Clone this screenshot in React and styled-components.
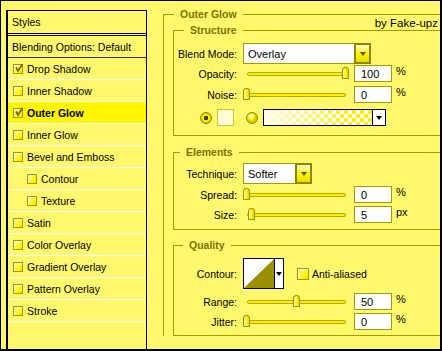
import React from 'react';
import styled, { createGlobalStyle } from 'styled-components';

const GlobalStyle = createGlobalStyle`
  body {
    margin: 0;
    background: #fff;
  }
`;

const styleItems = [
	{ name: 'Drop Shadow', checked: true },
	{ name: 'Inner Shadow' },
	{ name: 'Outer Glow', checked: true, active: true },
	{ name: 'Inner Glow' },
	{ name: 'Bevel and Emboss' },
	{ name: 'Contour', indent: true },
	{ name: 'Texture', indent: true },
	{ name: 'Satin' },
	{ name: 'Color Overlay' },
	{ name: 'Gradient Overlay' },
	{ name: 'Pattern Overlay' },
	{ name: 'Stroke' }
];

function CheckBox({ checked, size = 10 }) {
	return (
		<Check $size={size}>
			{checked && (
				<svg width="10" height="10" viewBox="0 0 10 10">
					<path d="M2 4.5 L4 8 L8.5 1" fill="none" stroke="#6b6200" strokeWidth="1.6" />
				</svg>
			)}
		</Check>
	);
}

function Dropdown({ width, value }) {
	return (
		<SelectBox>
			<SelectField $w={width}>{value}</SelectField>
			<DropButton>
				<ArrowDown />
			</DropButton>
		</SelectBox>
	);
}

function SliderRow({ label, value, pos, unit, mt }) {
	return (
		<Row $mt={mt} $h={17}>
			<Label>{label}</Label>
			<Slider>
				<Track />
				<Thumb style={{ left: Math.round(pos * 99) + 'px' }} />
			</Slider>
			<NumberBox>{value}</NumberBox>
			<Unit>{unit}</Unit>
		</Row>
	);
}

export default function App() {
	return (
		<>
			<GlobalStyle />
			<Window>
				<StylesPanel>
					<PanelTitle>Styles</PanelTitle>
					<BlendingRow>Blending Options: Default</BlendingRow>
					{styleItems.map((item) => (
						<StyleRow key={item.name} $active={item.active} $indent={item.indent}>
							<CheckBox checked={item.checked} />
							{item.name}
						</StyleRow>
					))}
				</StylesPanel>

				<Settings>
					<Credit>by Fake-upz</Credit>
					<Group $open>
						<Legend $indent={10}>Outer Glow</Legend>

						<Group $top={3} $left={9}>
							<Legend $indent={10}>Structure</Legend>
							<GroupBody $pt={6} $pb={9}>
								<Row $h={21}>
									<Label>Blend Mode:</Label>
									<Dropdown width={111} value="Overlay" />
								</Row>
								<SliderRow label="Opacity:" value="100" pos={1} unit="%" mt={1} />
								<SliderRow label="Noise:" value="0" pos={0} unit="%" mt={4} />
								<ColorRow>
									<Radio $on />
									<Swatch />
									<Radio />
									<GradientPicker>
										<GradientFill />
										<GradientArrow>
											<ArrowDown $dark />
										</GradientArrow>
									</GradientPicker>
								</ColorRow>
							</GroupBody>
						</Group>

						<Group $top={10} $left={9}>
							<Legend $indent={6}>Elements</Legend>
							<GroupBody $pt={4} $pb={6}>
								<Row $h={21}>
									<Label>Technique:</Label>
									<Dropdown width={52} value="Softer" />
								</Row>
								<SliderRow label="Spread:" value="0" pos={0} unit="%" mt={2} />
								<SliderRow label="Size:" value="5" pos={0.05} unit="px" mt={3} />
							</GroupBody>
						</Group>

						<Group $top={9} $left={9}>
							<Legend $indent={9}>Quality</Legend>
							<GroupBody $pt={6} $pb={5}>
								<Row $h={31}>
									<Label>Contour:</Label>
									<ContourPicker>
										<ContourPreview>
											<svg width="30" height="29" viewBox="0 0 30 29">
												<rect width="30" height="29" fill="#fff" />
												<polygon points="0,29 30,0 30,29" fill="#9a9000" />
											</svg>
										</ContourPreview>
										<ContourArrow>
											<ArrowDown $dark />
										</ContourArrow>
									</ContourPicker>
									<AntiAlias>
										<CheckBox size={12} />
										Anti-aliased
									</AntiAlias>
								</Row>
								<SliderRow label="Range:" value="50" pos={0.5} unit="%" mt={4} />
								<SliderRow label="Jitter:" value="0" pos={0} unit="%" mt={3} />
							</GroupBody>
						</Group>
					</Group>
				</Settings>
			</Window>
		</>
	);
}

const Window = styled.div`
	width: 442px;
	height: 351px;
	box-sizing: border-box;
	border-style: solid;
	border-color: #000;
	border-width: 1px 2px 2px 1px;
	background: #fff86c;
	display: flex;
	overflow: hidden;
	font-family: 'Liberation Sans', Arial, sans-serif;
	font-size: 10.5px;
	color: #000;
`;

const StylesPanel = styled.div`
	margin: 9px 0 0 5px;
	width: 141px;
	flex-shrink: 0;
	box-sizing: border-box;
	border: solid #000;
	border-width: 1px 1px 0 2px;
	display: flex;
	flex-direction: column;
`;

const PanelTitle = styled.div`
	height: 22px;
	display: flex;
	align-items: center;
	padding-left: 4px;
	border-bottom: 3px double #000;
`;

const BlendingRow = styled.div`
	height: 21px;
	display: flex;
	align-items: center;
	padding-left: 4px;
	border-bottom: 1px solid #3a3500;
`;

const StyleRow = styled.div`
	height: 21px;
	display: flex;
	align-items: center;
	gap: 4px;
	padding-left: ${(p) => (p.$indent ? 19 : 5)}px;
	border-bottom: 1px solid #fff;
	background: ${(p) => (p.$active ? '#fff500' : 'transparent')};
	font-weight: ${(p) => (p.$active ? 'bold' : 'normal')};
`;

const Check = styled.span`
	width: ${(p) => p.$size}px;
	height: ${(p) => p.$size}px;
	box-sizing: border-box;
	flex-shrink: 0;
	border: 1px solid #a39a00;
	background: linear-gradient(135deg, #fff9b0 0%, #fff200 70%, #f0e000 100%);
	box-shadow: inset 1px 1px 0 #fffde0;
	display: flex;
	align-items: center;
	justify-content: center;
	overflow: visible;

	svg {
		flex-shrink: 0;
		margin: -1px -1px 0 0;
	}
`;

const Settings = styled.div`
	flex: 1;
	min-width: 0;
	position: relative;
	padding: 7px 0 0 16px;
`;

const Credit = styled.div`
	position: absolute;
	top: 15px;
	right: 2px;
	line-height: 14px;
	font-size: 11.5px;
`;

const Group = styled.fieldset`
	margin: ${(p) => p.$top || 0}px 0 0 ${(p) => p.$left || 0}px;
	padding: 0;
	min-width: 0;
	border: 1px solid #a39a00;
	border-right: none;
	${(p) => p.$open && 'border-bottom: none;'}
`;

const Legend = styled.legend`
	margin-left: ${(p) => p.$indent}px;
	padding: 0 6px;
	line-height: 13px;
	font-size: 10.5px;
	font-weight: bold;
	color: #7d7300;
`;

const GroupBody = styled.div`
	padding: ${(p) => p.$pt}px 0 ${(p) => p.$pb}px 0;
	display: flex;
	flex-direction: column;
`;

const Row = styled.div`
	display: flex;
	align-items: center;
	height: ${(p) => p.$h}px;
	margin-top: ${(p) => p.$mt || 0}px;
`;

const Label = styled.div`
	width: 63px;
	margin-right: 6px;
	flex-shrink: 0;
	text-align: right;
`;

const SelectBox = styled.div`
	display: flex;
	height: 21px;
`;

const SelectField = styled.div`
	width: ${(p) => p.$w}px;
	box-sizing: border-box;
	border: 1px solid #a39a00;
	border-right: none;
	background: #fff;
	display: flex;
	align-items: center;
	padding-left: 4px;
	font-size: 11px;
`;

const DropButton = styled.div`
	width: 17px;
	box-sizing: border-box;
	border: 2px solid #8f8600;
	background: linear-gradient(#fffbd0 0%, #fff200 55%, #eadc00 100%);
	display: flex;
	align-items: center;
	justify-content: center;
`;

const ArrowDown = styled.span`
	width: 0;
	height: 0;
	border-left: 3.5px solid transparent;
	border-right: 3.5px solid transparent;
	border-top: 4px solid ${(p) => (p.$dark ? '#000' : '#5e5600')};
`;

const Slider = styled.div`
	position: relative;
	width: 106px;
	height: 17px;
	flex-shrink: 0;
`;

const Track = styled.div`
	position: absolute;
	left: 4px;
	right: 3px;
	top: 7px;
	height: 4px;
	box-sizing: border-box;
	border: 1px solid #b5aa00;
	background: #ffec00;
	border-radius: 2px;
`;

const Thumb = styled.div`
	position: absolute;
	top: 2px;
	width: 7px;
	height: 12px;
	box-sizing: border-box;
	border: 1px solid #9a9000;
	border-radius: 4px 4px 1px 1px;
	background: linear-gradient(90deg, #fffbc0 0%, #ffee00 60%, #e8d800 100%);
`;

const NumberBox = styled.div`
	width: 38px;
	height: 17px;
	box-sizing: border-box;
	margin-left: 5px;
	border: 1px solid #a39a00;
	background: #fff;
	display: flex;
	align-items: center;
	padding-left: 6px;
	font-size: 11px;
`;

const Unit = styled.span`
	margin-left: 4px;
	font-size: 11px;
	align-self: flex-start;
	line-height: 13px;
`;

const ColorRow = styled.div`
	display: flex;
	align-items: center;
	height: 17px;
	margin: 6px 0 0 26px;
`;

const Radio = styled.span`
	width: 12px;
	height: 12px;
	box-sizing: border-box;
	border-radius: 50%;
	border: 1px solid #8f8600;
	margin-right: 5px;
	background: ${(p) =>
		p.$on
			? 'radial-gradient(circle, #3d3700 0 2px, #fff000 2.5px 3.5px, #d8cc00 4px)'
			: 'radial-gradient(circle at 40% 35%, #fffbc0 0 1.5px, #fff000 3px, #d8cc00 5px)'};
`;

const Swatch = styled.span`
	width: 17px;
	height: 17px;
	box-sizing: border-box;
	border: 1px solid #c9bf40;
	background: #fffbd2;
	margin-right: 12px;
`;

const GradientPicker = styled.div`
	display: flex;
	width: 123px;
	height: 17px;
	box-sizing: border-box;
	border: 1px solid #000;
`;

const GradientFill = styled.div`
	flex: 1;
	background: linear-gradient(90deg, #fffce8 0%, rgba(255, 252, 232, 0.6) 35%, rgba(255, 252, 232, 0) 85%),
		repeating-conic-gradient(#fff 0 25%, #ffec00 0 50%) 0 0 / 8px 8px;
`;

const GradientArrow = styled.div`
	width: 12px;
	border-left: 1px solid #000;
	background: #fff;
	display: flex;
	align-items: center;
	justify-content: center;
`;

const ContourPicker = styled.div`
	display: flex;
	width: 41px;
	height: 31px;
	box-sizing: border-box;
	border: 1px solid #000;
	background: #fff;
`;

const ContourPreview = styled.div`
	width: 30px;
	border-right: 1px solid #000;
	display: flex;
`;

const ContourArrow = styled.div`
	flex: 1;
	display: flex;
	align-items: center;
	justify-content: center;
`;

const AntiAlias = styled.div`
	display: flex;
	align-items: center;
	gap: 3px;
	margin-left: 13px;
`;
